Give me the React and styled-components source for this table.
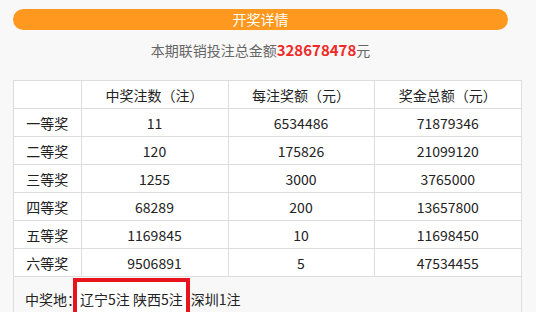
import React from 'react';
import styled, { createGlobalStyle } from 'styled-components';

const GlobalStyle = createGlobalStyle`
    body {
        margin: 0;
        background: #f8f8f8;
        font-family: "Noto Sans CJK SC", "Noto Sans", sans-serif;
    }
`;

const Page = styled.div`
    padding: 9px 14px 0 13px;
    width: 536px;
    height: 312px;
    box-sizing: border-box;
    overflow: hidden;
`;

const Header = styled.div`
    width: 495px;
`;

const TitleBar = styled.div`
    height: 21px;
    line-height: 21px;
    border-radius: 11px;
    background: #fe981e;
    color: #fff;
    font-size: 14px;
    text-align: center;
`;

const Summary = styled.div`
    margin-top: 9px;
    height: 22px;
    line-height: 22px;
    color: #666;
    font-size: 14px;
    text-align: center;
`;

const Amount = styled.span`
    color: #ee2a2a;
    font-weight: bold;
    font-size: 15px;
`;

const Box = styled.div`
    margin-top: 19px;
    border: 1px solid #ddd;
    border-bottom: none;
    width: 509px;
    box-sizing: border-box;
`;

const Table = styled.table`
    width: 100%;
    border-collapse: collapse;
    background: #fff;
    font-size: 14px;
    color: #222;
`;

const Cell = styled.td`
    height: 27px;
    padding: 0;
    text-align: center;
    border: 1px solid #ddd;
    &:first-child { border-left: none; }
    &:last-child { border-right: none; }
    tr:first-child > & { border-top: none; }
`;

const Footer = styled.div`
    padding: 12px 0 0 11px;
    height: 40px;
    font-size: 14px;
    line-height: 20px;
    color: #222;
`;

const Mark = styled.span`
    margin-left: -8px;
    margin-right: 1px;
    padding: 7px 3px 8px 3px;
    border: 4px solid #e8141c;
    background: #fff;
`;

const rows = [
    ['一等奖', '11', '6534486', '71879346'],
    ['二等奖', '120', '175826', '21099120'],
    ['三等奖', '1255', '3000', '3765000'],
    ['四等奖', '68289', '200', '13657800'],
    ['五等奖', '1169845', '10', '11698450'],
    ['六等奖', '9506891', '5', '47534455'],
];

const App = () => (
    <Page>
        <GlobalStyle />
        <Header>
            <TitleBar>开奖详情</TitleBar>
            <Summary>本期联销投注总金额<Amount>328678478</Amount>元</Summary>
        </Header>
        <Box>
            <Table>
                <colgroup>
                    <col style={{ width: 67 }} />
                    <col style={{ width: 147 }} />
                    <col style={{ width: 146 }} />
                    <col />
                </colgroup>
                <tbody>
                    <tr>
                        <Cell></Cell>
                        <Cell>中奖注数（注）</Cell>
                        <Cell>每注奖额（元）</Cell>
                        <Cell>奖金总额（元）</Cell>
                    </tr>
                    {rows.map(r => (
                        <tr key={r[0]}>
                            {r.map((c, i) => <Cell key={i}>{c}</Cell>)}
                        </tr>
                    ))}
                </tbody>
            </Table>
            <Footer>
                中奖地：<Mark>辽宁5注 陕西5注</Mark>深圳1注
            </Footer>
        </Box>
    </Page>
);

export default App;
